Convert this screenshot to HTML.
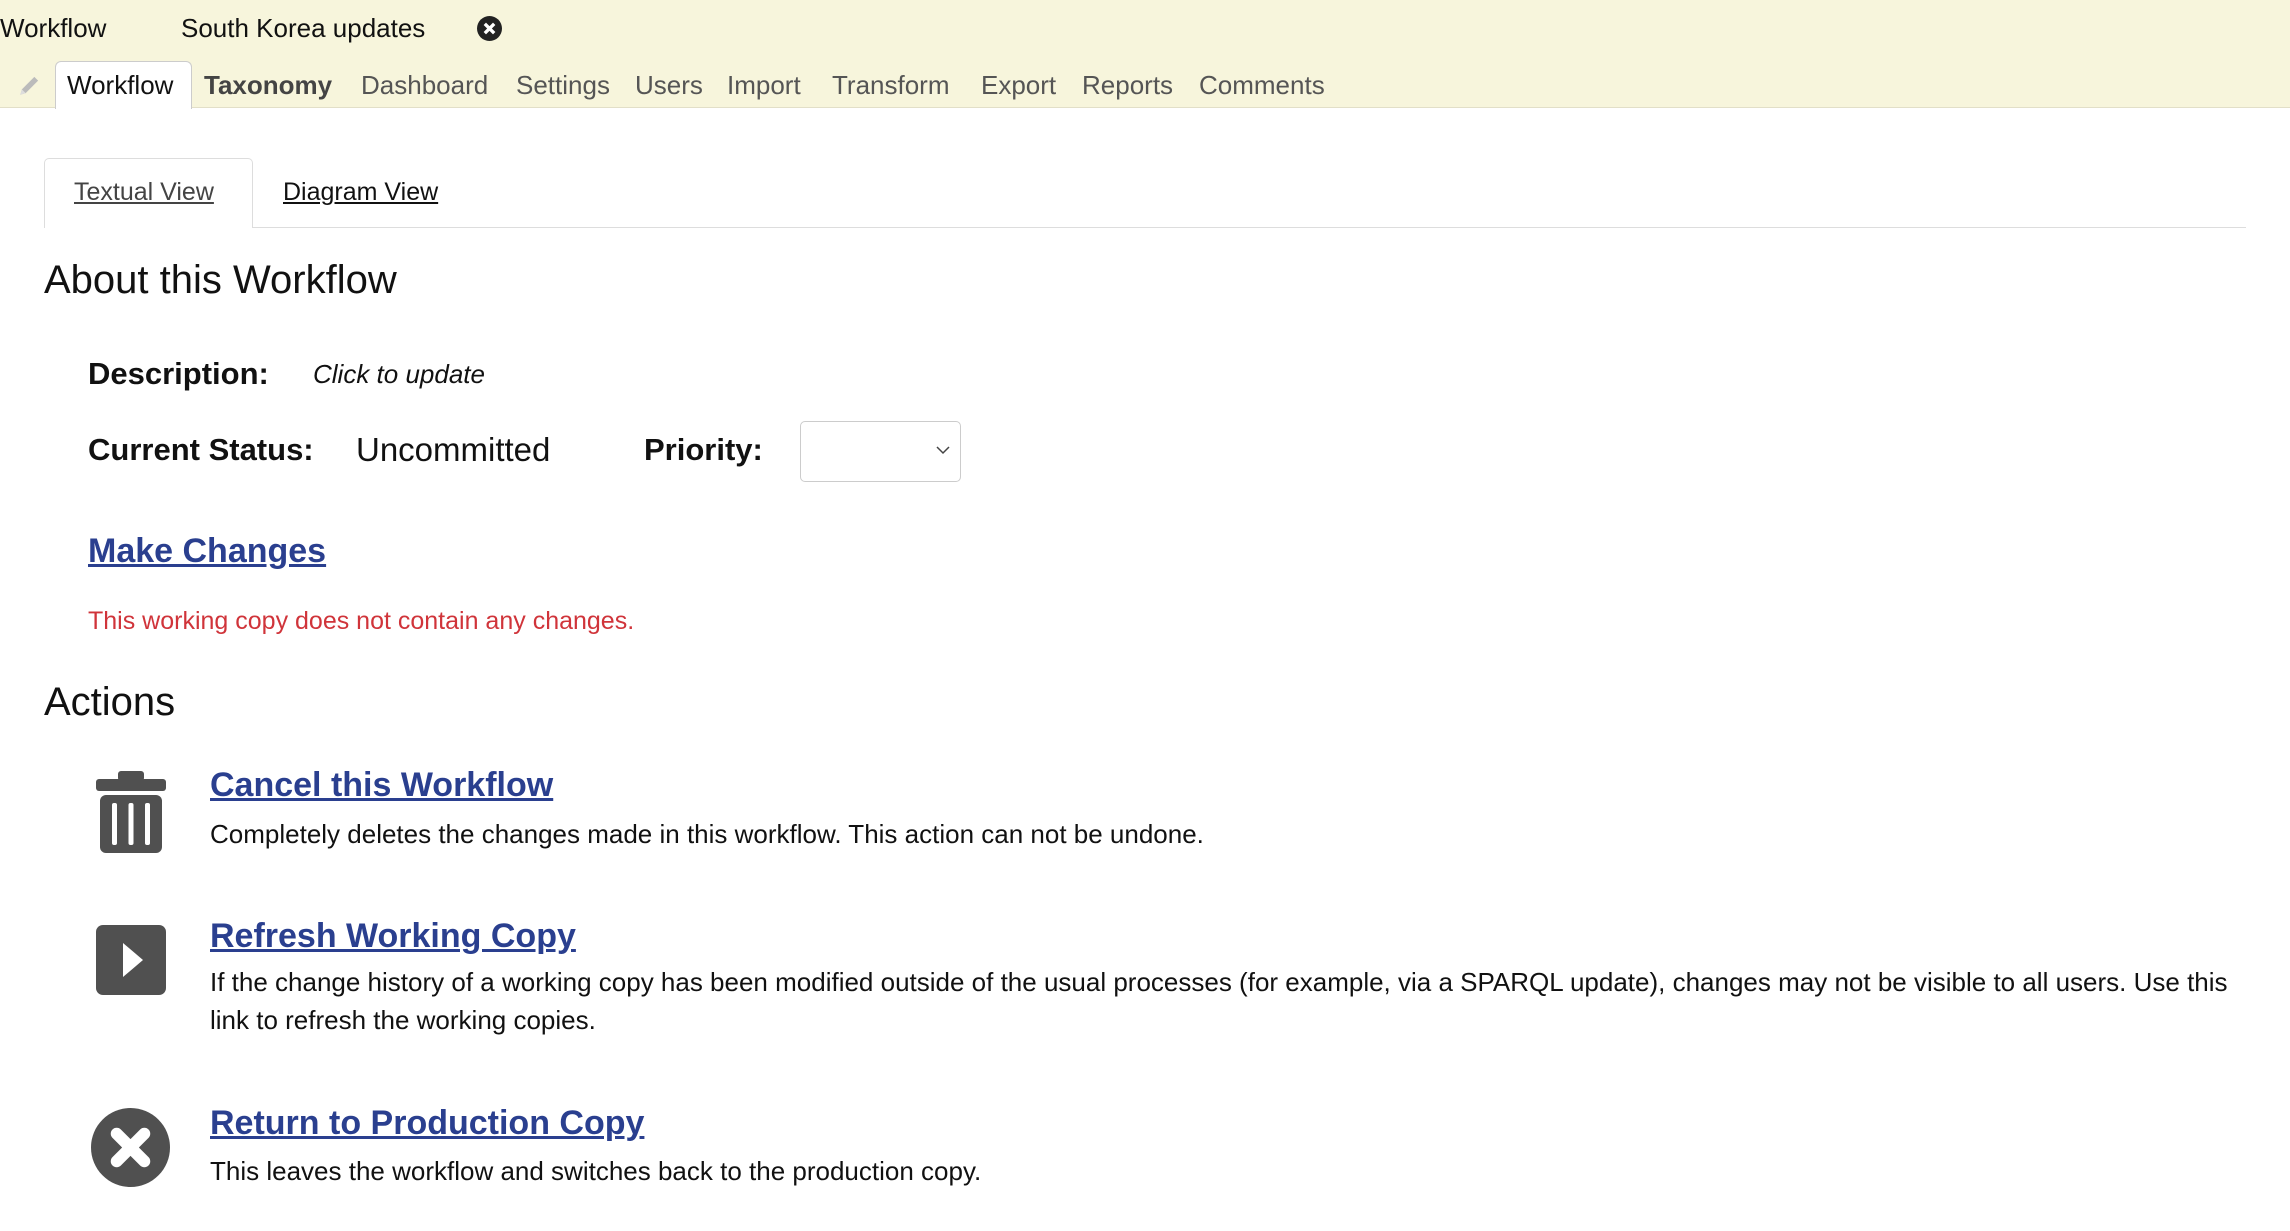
<!DOCTYPE html>
<html><head><meta charset="utf-8">
<style>
*{margin:0;padding:0;box-sizing:border-box}
body{width:2290px;height:1231px;background:#fff;font-family:"Liberation Sans",sans-serif;color:#111;position:relative;overflow:hidden}
.a{position:absolute;white-space:nowrap;line-height:1}
.top{position:absolute;left:0;top:0;width:2290px;height:108px;background:#f7f5dc;border-bottom:1px solid #e2dfc8}
.nav{color:#555;font-size:26px}
a{color:#2a3f8f;text-decoration:underline}
.lnk{font-size:34px;font-weight:bold;color:#2a3f8f;text-decoration:underline;text-decoration-thickness:3px}
.desc{font-size:26px;color:#111}
</style></head><body>
<div class="top"></div>
<div class="a" style="left:0;top:15px;font-size:26px">Workflow</div>
<div class="a" style="left:181px;top:15px;font-size:26px">South Korea updates</div>
<svg class="a" style="left:477px;top:16px" width="25" height="25" viewBox="0 0 24 24"><circle cx="12" cy="12" r="12" fill="#222"/><path d="M7.5 7.5l9 9M16.5 7.5l-9 9" stroke="#fff" stroke-width="3.2"/></svg>
<svg class="a" style="left:17px;top:72px" width="26" height="26" viewBox="0 0 24 24"><path d="M3 21l1.5-5L16 4.5l3.5 3.5L8 19.5z" fill="#bbb"/><path d="M3 21l1.5-5 3.5 3.5z" fill="#ddd"/></svg>
<div class="a" style="left:55px;top:61px;width:137px;height:48px;background:#fff;border:1px solid #ccc;border-bottom:none;border-radius:6px 6px 0 0"></div>
<div class="a" style="left:67px;top:72px;font-size:26px;color:#111">Workflow</div>
<div class="a nav" style="left:204px;top:72px;font-weight:bold;color:#444">Taxonomy</div>
<div class="a nav" style="left:361px;top:72px">Dashboard</div>
<div class="a nav" style="left:516px;top:72px">Settings</div>
<div class="a nav" style="left:635px;top:72px">Users</div>
<div class="a nav" style="left:727px;top:72px">Import</div>
<div class="a nav" style="left:832px;top:72px">Transform</div>
<div class="a nav" style="left:981px;top:72px">Export</div>
<div class="a nav" style="left:1082px;top:72px">Reports</div>
<div class="a nav" style="left:1199px;top:72px">Comments</div>

<div class="a" style="left:44px;top:227px;width:2202px;height:1px;background:#ddd"></div>
<div class="a" style="left:44px;top:158px;width:209px;height:70px;background:#fff;border:1px solid #ddd;border-bottom:none;border-radius:5px 5px 0 0"></div>
<div class="a" style="left:74px;top:180px;font-size:25px;color:#444;text-decoration:underline">Textual View</div>
<div class="a" style="left:283px;top:180px;font-size:25px;color:#111;text-decoration:underline">Diagram View</div>

<div class="a" style="left:44px;top:260px;font-size:40px">About this Workflow</div>
<div class="a" style="left:88px;top:358px;font-size:31px;font-weight:bold">Description:</div>
<div class="a" style="left:313px;top:361px;font-size:26px;font-style:italic">Click to update</div>
<div class="a" style="left:88px;top:434px;font-size:31px;font-weight:bold">Current Status:</div>
<div class="a" style="left:356px;top:433px;font-size:33px">Uncommitted</div>
<div class="a" style="left:644px;top:434px;font-size:31px;font-weight:bold">Priority:</div>
<div class="a" style="left:800px;top:421px;width:161px;height:61px;border:1px solid #ccc;border-radius:5px"></div>
<svg class="a" style="left:936px;top:445px" width="14" height="10" viewBox="0 0 14 10"><path d="M1 2l6 6 6-6" fill="none" stroke="#444" stroke-width="1.5"/></svg>
<div class="a lnk" style="left:88px;top:534px">Make Changes</div>
<div class="a" style="left:88px;top:609px;font-size:25px;color:#d0343a">This working copy does not contain any changes.</div>
<div class="a" style="left:44px;top:682px;font-size:40px">Actions</div>

<svg class="a" style="left:96px;top:771px" width="70" height="82" viewBox="0 0 70 82"><rect x="0" y="8" width="70" height="12" rx="3" fill="#505050"/><rect x="22" y="0" width="26" height="10" rx="3" fill="#505050"/><rect x="4" y="24" width="62" height="58" rx="6" fill="#505050"/><rect x="16" y="32" width="5" height="42" rx="2" fill="#fff"/><rect x="32.5" y="32" width="5" height="42" rx="2" fill="#fff"/><rect x="49" y="32" width="5" height="42" rx="2" fill="#fff"/></svg>
<div class="a lnk" style="left:210px;top:768px">Cancel this Workflow</div>
<div class="a desc" style="left:210px;top:821px">Completely deletes the changes made in this workflow. This action can not be undone.</div>

<svg class="a" style="left:96px;top:925px" width="70" height="70" viewBox="0 0 70 70"><rect width="70" height="70" rx="7" fill="#505050"/><path d="M27 18l20 17-20 17z" fill="#fff"/></svg>
<div class="a lnk" style="left:210px;top:919px">Refresh Working Copy</div>
<div class="a desc" style="left:210px;top:963px;line-height:38px;width:2040px;white-space:normal">If the change history of a working copy has been modified outside of the usual processes (for example, via a SPARQL update), changes may not be visible to all users. Use this link to refresh the working copies.</div>

<svg class="a" style="left:91px;top:1108px" width="79" height="79" viewBox="0 0 80 80"><circle cx="40" cy="40" r="40" fill="#505050"/><path d="M26 26l28 28M54 26L26 54" stroke="#fff" stroke-width="12" stroke-linecap="round"/></svg>
<div class="a lnk" style="left:210px;top:1106px">Return to Production Copy</div>
<div class="a desc" style="left:210px;top:1158px">This leaves the workflow and switches back to the production copy.</div>
</body></html>
